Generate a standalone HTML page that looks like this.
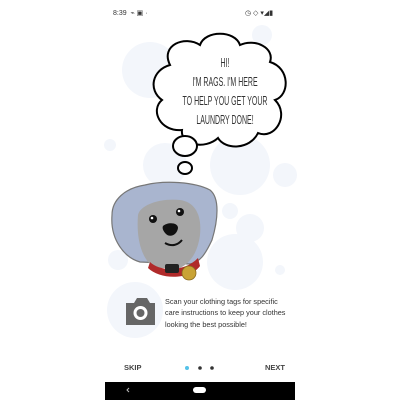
<!DOCTYPE html>
<html><head><style>
body{margin:0;width:400px;height:400px;background:#fff;position:relative;overflow:hidden;font-family:"Liberation Sans",sans-serif}
.a{position:absolute}
</style></head><body>
<svg class="a" style="left:0;top:0" width="400" height="400" viewBox="0 0 400 400">
<g fill="#f3f6fb">
<circle cx="150" cy="70" r="28"/><circle cx="165" cy="165" r="22"/><circle cx="262" cy="35" r="10"/>
<circle cx="240" cy="165" r="30"/><circle cx="235" cy="262" r="28"/>
<circle cx="250" cy="228" r="14"/><circle cx="230" cy="211" r="8"/>
<circle cx="135" cy="310" r="28"/><circle cx="285" cy="175" r="12"/>
<circle cx="280" cy="270" r="5"/><circle cx="110" cy="145" r="6"/><circle cx="118" cy="260" r="10"/>
</g>
<g fill="#fff" stroke="#000" stroke-width="2">
<path d="M170,65 C160,45 185,35 200,45 C205,30 235,30 240,45 C255,38 275,48 270,62 C290,68 290,95 275,100 C290,115 275,140 258,133 C250,150 225,150 218,138 C205,150 180,145 182,130 C160,132 150,110 162,100 C148,90 152,70 170,65 Z"/>
<ellipse cx="185" cy="146" rx="12" ry="10"/>
<ellipse cx="185" cy="168" rx="7" ry="6"/>
</g>
<path d="M112,215 C112,200 125,188 145,185 C165,180 195,182 210,190 C220,198 218,220 212,240 C205,255 200,262 190,264 L140,262 C125,258 110,240 112,215 Z" fill="#a9b5cf" stroke="#777" stroke-width="1.2"/>
<path d="M138,215 C140,205 160,198 180,200 C195,202 202,215 200,235 C198,250 192,262 180,268 L155,268 C142,260 136,240 138,215 Z" fill="#a6a6a6"/>
<path d="M150,262 C160,272 185,272 198,258 L200,266 C190,280 160,280 148,268 Z" fill="#b02a2a"/>
<rect x="165" y="264" width="14" height="9" rx="2" fill="#222"/>
<circle cx="189" cy="273" r="7" fill="#c9a335" stroke="#8a6a20" stroke-width="0.8"/>
<circle cx="153" cy="219" r="4" fill="#111"/><circle cx="152" cy="218" r="1.3" fill="#fff"/>
<circle cx="180" cy="212" r="4" fill="#111"/><circle cx="179" cy="211" r="1.3" fill="#fff"/>
<path d="M163,226 C167,222 178,222 178,228 C177,235 170,238 166,234 C163,231 162,228 163,226 Z" fill="#111"/>
<path d="M165,243 C172,247 178,245 182,240" stroke="#111" stroke-width="2" fill="none"/>
<path d="M126,303 h8 l3,-5 h10 l3,5 h5 v22 h-29 z" fill="#666"/>
<circle cx="140.5" cy="313" r="7" fill="#fff"/><circle cx="140.5" cy="313" r="4" fill="#666"/>
<circle cx="187" cy="368" r="2" fill="#55c2e8"/><circle cx="200" cy="368" r="1.8" fill="#333"/><circle cx="212" cy="368" r="1.8" fill="#333"/>
<rect x="105" y="382" width="190" height="18" fill="#000"/>
<path d="M129,388 l-2,2 l2,2" stroke="#bbb" stroke-width="1" fill="none"/>
<rect x="193" y="387" width="13" height="6" rx="3" fill="#fff"/>
</svg>
<div class="a" style="left:113px;top:9px;font-size:7px;color:#333">8:39 &nbsp;⌁ ▣ ·</div>
<div class="a" style="left:245px;top:9px;font-size:7px;color:#333">◷ ◇ ▾◢▮</div>
<div class="a" style="left:145px;top:54px;width:160px;text-align:center;font-size:12.5px;line-height:19px;color:#333;font-family:'Liberation Sans',sans-serif;transform:scaleX(0.56);transform-origin:80px 0;white-space:nowrap">HI!<br>I'M RAGS. I'M HERE<br>TO HELP YOU GET YOUR<br>LAUNDRY DONE!</div>
<div class="a" style="left:165px;top:296px;font-size:7.3px;line-height:11.3px;color:#333;white-space:nowrap">Scan your clothing tags for specific<br>care instructions to keep your clothes<br>looking the best possible!</div>
<div class="a" style="left:124px;top:363px;font-size:7.5px;font-weight:bold;color:#444">SKIP</div>
<div class="a" style="left:265px;top:363px;font-size:7.5px;font-weight:bold;color:#444">NEXT</div>
</body></html>
